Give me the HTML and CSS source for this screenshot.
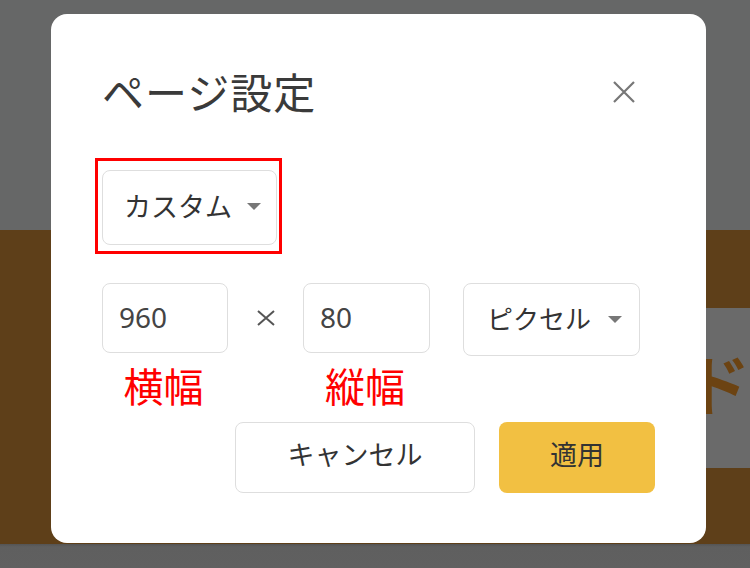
FILE: index.html
```html
<!DOCTYPE html>
<html lang="ja">
<head>
<meta charset="utf-8">
<title>ページ設定</title>
<link rel="stylesheet" href="styles.css">
</head>
<body>
<div class="page">
  <div class="page-top"></div>
  <div class="page-band">
    <div class="banner"><span class="banner-text">ド</span></div>
  </div>
  <div class="page-bottom"></div>
</div>

<div class="dialog">
  <div class="dialog-header">
    <h1 class="dialog-title">ページ設定</h1>
    <button class="close-btn" aria-label="閉じる">
      <svg width="22" height="22" viewBox="0 0 22 22"><path d="M1 1 L21 21 M21 1 L1 21" stroke="#777" stroke-width="2.2" fill="none"/></svg>
    </button>
  </div>

  <div class="highlight">
    <div class="select select-preset">
      <span class="select-label">カスタム</span>
      <svg class="caret" width="14" height="7" viewBox="0 0 14 7"><polygon points="0,0 14,0 7,7" fill="#777"/></svg>
    </div>
  </div>

  <div class="size-row">
    <div class="field">
      <div class="input input-w">960</div>
      <div class="field-label">横幅</div>
    </div>
    <div class="times">
      <svg width="20" height="16" viewBox="0 0 20 16"><path d="M2 1 L18 15 M18 1 L2 15" stroke="#555" stroke-width="2" fill="none"/></svg>
    </div>
    <div class="field">
      <div class="input input-h">80</div>
      <div class="field-label">縦幅</div>
    </div>
    <div class="select select-unit">
      <span class="select-label">ピクセル</span>
      <svg class="caret" width="14" height="7" viewBox="0 0 14 7"><polygon points="0,0 14,0 7,7" fill="#777"/></svg>
    </div>
  </div>

  <div class="actions">
    <button class="btn btn-cancel">キャンセル</button>
    <button class="btn btn-apply">適用</button>
  </div>
</div>
</body>
</html>
```

FILE: styles.css
```css
* { box-sizing: border-box; }

html, body {
  margin: 0;
  padding: 0;
}

body {
  width: 750px;
  height: 568px;
  overflow: hidden;
  position: relative;
  font-family: "Noto Sans", "Noto Sans CJK JP", sans-serif;
  color: #333;
}

.page {
  display: flex;
  flex-direction: column;
  height: 568px;
}

.page-top {
  height: 230px;
  background: #666767;
}

.page-band {
  height: 314px;
  background: #5e3f19;
  display: flex;
  justify-content: flex-end;
  align-items: flex-start;
  padding-top: 78px;
}

.banner {
  width: 330px;
  height: 160px;
  background: #6a6a6a;
  padding-left: 264px;
  padding-top: 40px;
  overflow: hidden;
}

.banner-text {
  display: block;
  width: 66px;
  font-family: "Noto Sans CJK JP", sans-serif;
  font-weight: 700;
  font-size: 66px;
  line-height: 1;
  color: #6c4312;
}

.page-bottom {
  flex: 1;
  background: linear-gradient(#545454 0, #5f5f5f 3px, #606060 100%);
}

.dialog {
  position: absolute;
  left: 51px;
  top: 14px;
  width: 655px;
  height: 529px;
  background: #fff;
  border-radius: 16px;
  padding: 54px 51px 0 51px;
}

.dialog-header {
  display: flex;
  justify-content: space-between;
  align-items: center;
  height: 48px;
}

.dialog-title {
  margin: 0;
  font-family: "Noto Sans CJK JP", sans-serif;
  font-weight: 400;
  font-size: 42px;
  line-height: 48px;
  color: #3a3a3a;
  letter-spacing: 1px;
  margin-top: -2px;
}

.close-btn {
  border: 0;
  background: none;
  padding: 0;
  margin-right: 20px;
  width: 22px;
  height: 22px;
  display: flex;
}

.highlight {
  width: 187px;
  margin-top: 42px;
  margin-left: -7px;
  border: 3px solid #f00;
  padding: 9px 2px 6px 4px;
}

.select {
  display: flex;
  align-items: center;
  border: 1px solid #dedede;
  border-radius: 8px;
  background: #fff;
  font-family: "Noto Sans CJK JP", sans-serif;
}

.select-label {
  font-size: 27px;
  line-height: 1;
  color: #333;
}

.caret {
  margin-left: 15px;
  margin-top: 2px;
}

.select-preset {
  width: 175px;
  height: 75px;
  padding-left: 21px;
  padding-bottom: 4px;
}

.size-row {
  display: flex;
  align-items: flex-start;
  margin-top: 29px;
}

.field {
  display: flex;
  flex-direction: column;
  align-items: center;
}

.input {
  height: 70px;
  border: 1px solid #dedede;
  border-radius: 8px;
  display: flex;
  align-items: center;
  align-self: stretch;
  padding-left: 16px;
  font-size: 28px;
  color: #444;
  padding-bottom: 2px;
}

.input-w { width: 126px; }
.input-h { width: 127px; }

.field-label {
  margin-top: 10px;
  font-family: "Noto Sans CJK JP", sans-serif;
  font-size: 40px;
  line-height: 44px;
  color: #f00;
  margin-right: 3px;
}

.times {
  width: 75px;
  height: 70px;
  display: flex;
  align-items: center;
  justify-content: center;
  padding-left: 1px;
}

.select-unit {
  width: 177px;
  height: 73px;
  margin-left: 33px;
  padding-left: 23px;
  padding-bottom: 3px;
}

.select-unit .select-label { font-size: 26px; }
.select-unit .caret { margin-left: 17px; }

.actions {
  display: flex;
  justify-content: flex-end;
  gap: 24px;
  margin-top: 15px;
}

.btn {
  height: 71px;
  border-radius: 8px;
  font-family: "Noto Sans CJK JP", sans-serif;
  font-size: 27px;
  color: #333;
  padding: 0 0 8px 0;
  line-height: 1;
}

.btn-cancel {
  width: 240px;
  background: #fff;
  border: 1px solid #dedede;
}

.btn-apply {
  width: 156px;
  background: #f2c042;
  border: 0;
}
```
